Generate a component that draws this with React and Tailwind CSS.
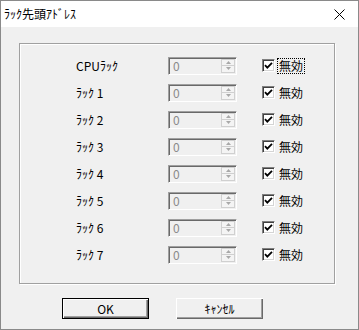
import React from 'react';

const rows = ['CPUﾗｯｸ', 'ﾗｯｸ 1', 'ﾗｯｸ 2', 'ﾗｯｸ 3', 'ﾗｯｸ 4', 'ﾗｯｸ 5', 'ﾗｯｸ 6', 'ﾗｯｸ 7'];

function SpinEdit() {
  return (
    <div className="flex h-[18px] w-[69px] items-stretch bg-[#f0f0f0] border-t border-l border-[#a0a0a0] border-b border-r border-b-white border-r-white shadow-[inset_1px_1px_0_#696969]">
      <div className="flex-1 pl-[4px] text-[12px] leading-[16px] text-[#8a8a8a]">0</div>
      <div className="flex w-[15px] flex-col py-[1px] pr-[1px]">
        <div className="flex flex-1 items-center justify-center border border-[#d0d0d0] bg-[#f4f4f4]">
          <svg width="5" height="3" viewBox="0 0 5 3"><path d="M0 3 L2.5 0 L5 3 Z" fill="#a8a8a8" /></svg>
        </div>
        <div className="flex flex-1 items-center justify-center border border-t-0 border-[#d0d0d0] bg-[#f4f4f4]">
          <svg width="5" height="3" viewBox="0 0 5 3"><path d="M0 0 L2.5 3 L5 0 Z" fill="#a8a8a8" /></svg>
        </div>
      </div>
    </div>
  );
}

function Check({ focus }) {
  return (
    <div className="flex items-center">
      <div className="flex h-[13px] w-[13px] items-center justify-center bg-white border-t border-l border-[#808080] border-b border-r border-b-white border-r-white shadow-[inset_1px_1px_0_#404040,inset_-1px_-1px_0_#d4d4d4]">
        <svg width="9" height="9" viewBox="0 0 9 9">
          <path d="M1 4.2 L3.3 6.6 L8 1.8" fill="none" stroke="#000" strokeWidth="1.8" />
        </svg>
      </div>
      <span className={'ml-[3px] px-[1px] text-[12px] leading-[14px] ' + (focus ? 'outline outline-1 outline-dotted outline-black' : '')}>
        無効
      </span>
    </div>
  );
}

export default function App() {
  return (
    <div
      className="relative h-[330px] w-[359px] overflow-hidden border border-[#8a8a8a] bg-[#f0f0f0] text-black"
      style={{ fontFamily: '"Noto Sans CJK JP", "Noto Sans", sans-serif' }}
    >
      <div className="flex h-[26px] items-center justify-between bg-white pl-[3px] pr-[13px]">
        <span className="text-[12px]">ﾗｯｸ先頭ｱﾄﾞﾚｽ</span>
        <svg width="11" height="11" viewBox="0 0 11 11">
          <path d="M0.5 0.5 L10.5 10.5 M10.5 0.5 L0.5 10.5" stroke="#000" strokeWidth="1" />
        </svg>
      </div>

      <div className="ml-[18px] mt-[16px] h-[241px] w-[316px] border border-[#a0a0a0] shadow-[inset_1px_1px_0_#fff,1px_1px_0_#fff] pl-[56px] pt-[8px]">
        {rows.map((r, i) => (
          <div key={r} className="flex h-[27px] items-center">
            <div className="w-[92px] text-[12px]">{r}</div>
            <SpinEdit />
            <div className="ml-[25px]">
              <Check focus={i === 0} />
            </div>
          </div>
        ))}
      </div>

      <div className="ml-[61px] mt-[14px] flex gap-[27px]">
        <button className="h-[21px] w-[87px] border border-black bg-[#f0f0f0] text-[12px] shadow-[inset_1px_1px_0_#fff,inset_-1px_-1px_0_#696969,inset_-2px_-2px_0_#a0a0a0]">
          OK
        </button>
        <button className="h-[21px] w-[87px] bg-[#f0f0f0] text-[12px] shadow-[inset_1px_1px_0_#fff,inset_-1px_-1px_0_#696969,inset_-2px_-2px_0_#a0a0a0]">
          ｷｬﾝｾﾙ
        </button>
      </div>
    </div>
  );
}
